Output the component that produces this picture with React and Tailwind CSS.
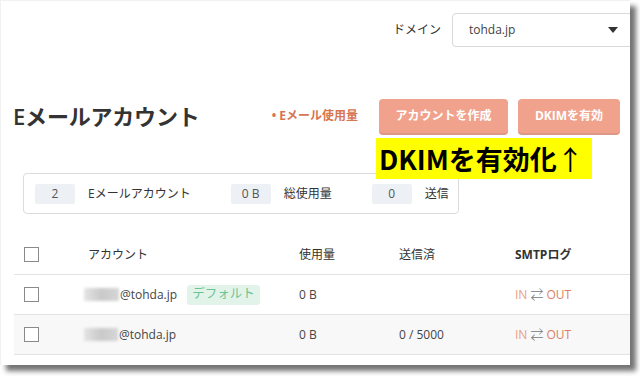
import { useState } from "react";

const stats = [
  { value: "2", label: "Eメールアカウント", gap: "mr-[40px]" },
  { value: "0 B", label: "総使用量", gap: "mr-[40px]" },
  { value: "0", label: "送信", gap: "" },
];

const accounts = [
  { blur: "w-[35px]", isDefault: true, used: "0 B", sent: "" },
  { blur: "w-[34px]", isDefault: false, used: "0 B", sent: "0 / 5000" },
];

function Checkbox() {
  return <span className="block w-[15px] h-[15px] border border-[#8a8a8a] bg-white" />;
}

function BlurredName({ width }) {
  // hidden local-part of the address, shown blurred in the screenshot
  return (
    <span className={`relative inline-block h-[13px] ${width} mr-[1px]`}>
      <span className="absolute inset-0 bg-gradient-to-r from-[#e4e4e4] via-[#c9c9c9] to-[#d6d6d6] blur-[1.5px]" />
    </span>
  );
}

function InOut() {
  return (
    <span className="flex items-center">
      <span className="text-[#e6a08c]">IN</span>
      <span className="mx-[3px] text-[#777] text-[13px] font-light">⇄</span>
      <span className="text-[#db7f63]">OUT</span>
    </span>
  );
}

export default function App() {
  const [domain] = useState("tohda.jp");
  const row = "grid grid-cols-[74px_211px_100px_116px_1fr] items-center h-[40px] border-b border-[#e3e3e3]";

  return (
    <div className="w-[640px] h-[376px] bg-white overflow-hidden font-['Open_Sans','Noto_Sans_CJK_JP',sans-serif] text-[#333]">
      <div className="relative w-[630px] h-[365px] bg-white border-l border-t border-[#f1f1f1] overflow-hidden shadow-[6px_6px_5px_rgba(0,0,0,0.55)]">
        {/* Domain selector */}
        <div className="flex justify-end items-center pt-[12px] -mr-[12px]">
          <span className="text-[12px] mr-[11px]">ドメイン</span>
          <div className="w-[190px] h-[34px] flex items-center justify-between pl-[16px] pr-[23px] border border-[#d9d9d9] rounded-[4px]">
            <span className="text-[12px] text-[#444]">{domain}</span>
            <span className="w-0 h-0 border-l-[5px] border-r-[5px] border-t-[6px] border-l-transparent border-r-transparent border-t-[#333]" />
          </div>
        </div>

        {/* Title row */}
        <div className="flex items-center mt-[52px] pl-[12px] pr-[10px]">
          <h1 className="text-[22px] font-semibold tracking-[-0.2px] text-[#333] leading-none">Eメールアカウント</h1>
          <span className="ml-auto mr-[21px] text-[12px] font-bold text-[#d77550]">• Eメール使用量</span>
          <button className="w-[129px] h-[34px] rounded-[4px] bg-[#f1a28c] text-white text-[12px] font-bold shadow-[0_2px_0_#dc9884] mr-[10px]">
            アカウントを作成
          </button>
          <button className="w-[102px] h-[34px] rounded-[4px] bg-[#f1a28c] text-white text-[12px] font-bold shadow-[0_2px_0_#dc9884]">
            DKIMを有効
          </button>
        </div>

        {/* Annotation */}
        <div className="absolute left-[375px] top-[137px] w-[216px] h-[41px] bg-[#ffff00] flex items-center pl-[3px] z-10 whitespace-nowrap">
          <span className="text-[27px] font-bold text-black leading-none tracking-[0px] font-['Noto_Sans_CJK_JP',sans-serif]">
            DKIMを有効化<span className="font-normal">↑</span>
          </span>
        </div>

        {/* Stats box */}
        <div className="ml-[22px] mt-[40px] w-[436px] h-[41px] flex items-center pl-[11px] border border-[#dcdcdc] rounded-[4px]">
          {stats.map((s) => (
            <div key={s.label} className={`flex items-center ${s.gap}`}>
              <span className="w-[40px] h-[20px] flex items-center justify-center bg-[#edf1f5] rounded-[2px] text-[12px] text-[#555]">
                {s.value}
              </span>
              <span className="ml-[13px] text-[12px] text-[#333]">{s.label}</span>
            </div>
          ))}
        </div>

        {/* Accounts table */}
        <div className="ml-[13px] mt-[21px] text-[12px]">
          <div className={row}>
            <span className="pl-[10px]"><Checkbox /></span>
            <span>アカウント</span>
            <span>使用量</span>
            <span>送信済</span>
            <span className="font-bold">SMTPログ</span>
          </div>
          {accounts.map((a, i) => (
            <div key={i} className={`${row} ${i % 2 === 1 ? "bg-[#f8f8f8]" : ""}`}>
              <span className="pl-[10px]"><Checkbox /></span>
              <span className="flex items-center -ml-[4px]">
                <BlurredName width={a.blur} />
                <span className="text-[#444]">@tohda.jp</span>
                {a.isDefault && (
                  <span className="ml-[10px] h-[20px] px-[5px] flex items-center rounded-[3px] bg-[#e2f4ea] text-[#6cc393] text-[12.5px]">
                    デフォルト
                  </span>
                )}
              </span>
              <span className="text-[#444]">{a.used}</span>
              <span className="text-[#444]">{a.sent}</span>
              <InOut />
            </div>
          ))}
        </div>
      </div>
    </div>
  );
}
